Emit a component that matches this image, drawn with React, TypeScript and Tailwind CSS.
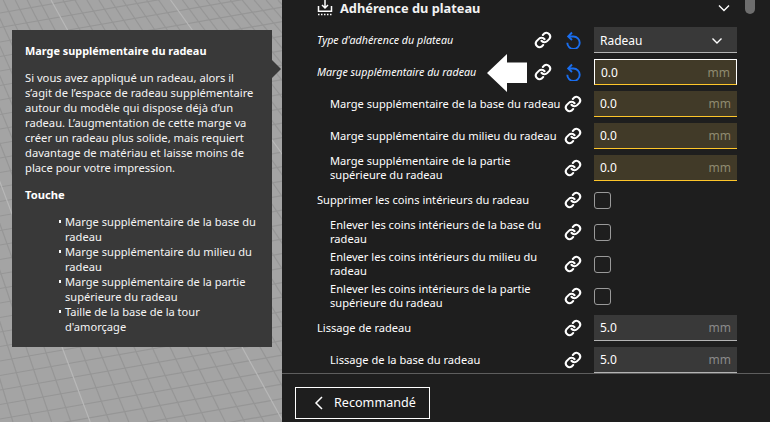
const fontStack = "font-['Noto_Sans','Open_Sans',sans-serif]";

function LinkIcon() {
  return (
    <svg width="18" height="18" viewBox="0 0 24 24" fill="none" stroke="#fff" strokeWidth="2.800" strokeLinecap="round" strokeLinejoin="round" className="shrink-0">
      <path d="M10 13a5 5 0 0 0 7.500.5l3-3a5 5 0 0 0-7-7l-1.700 1.700" />
      <path d="M14 11a5 5 0 0 0-7.500-.5l-3 3a5 5 0 0 0 7 7l1.700-1.700" />
    </svg>
  );
}

function ResetIcon() {
  return (
    <svg width="17" height="18" viewBox="0 0 17 18" fill="none" stroke="#196ef0" strokeWidth="1.900" className="shrink-0">
      <path d="M4 5.500h4.500a6.200 6.200 0 1 1-6.200 6.200" />
      <path d="M7 1.500 3.200 5.500 7 9" />
    </svg>
  );
}

function Field({ value, state = "normal" }: { value: string; state?: "normal" | "warn" | "focus" }) {
  const cls =
    state === "normal"
      ? "bg-[#393939] border-b border-[#b4b4b4]"
      : state === "warn"
      ? "bg-[#413a28] border-b border-[#fec62a]"
      : "bg-[#413a28] border border-white border-b-[#fec62a]";
  return (
    <div className={`w-[143px] h-[26px] shrink-0 flex items-center justify-between pl-[6px] pr-[6px] pt-[1px] text-[12px] ${cls}`}>
      <span className="text-white">{value}</span>
      <span className={state === "normal" ? "text-[#8a8a8a]" : "text-[#8f8a70]"}>mm</span>
    </div>
  );
}

function Check() {
  return <div className="w-[17px] h-[17px] rounded-[3px] border-[1.5px] border-[#9a9a9a]" />;
}

type RowProps = {
  label: React.ReactNode;
  indent?: boolean;
  italic?: boolean;
  reset?: boolean;
  control: React.ReactNode;
};

function Row({ label, indent, italic, reset, control }: RowProps) {
  return (
    <div className="h-[32px] flex items-center pl-[35px] pr-[33px]">
      <div className={`flex-1 min-w-0 flex items-center leading-[14px] whitespace-nowrap text-white ${indent ? "pl-[13px]" : ""} ${italic ? "italic text-[10.700px]" : "text-[11.100px]"}`}>
        <span>{label}</span>
      </div>
      {reset ? (
        <div className="flex items-center gap-[13px] mr-[12px]">
          <LinkIcon />
          <ResetIcon />
        </div>
      ) : (
        <div className="mr-[12px]">
          <LinkIcon />
        </div>
      )}
      <div className="w-[143px] shrink-0 flex items-center">{control}</div>
    </div>
  );
}

function Grid() {
  const lines: React.ReactNode[] = [];
  const vx = -326;
  const vy = -685;
  const y0 = 347;
  for (let i = -30; i < 30; i++) {
    const y = 361 + i * 14.5;
    lines.push(<line key={`h${i}`} x1="0" y1={y} x2="282" y2={y - 282 * 0.175} stroke="#969696" strokeWidth="1.200" />);
  }
  for (let i = -40; i < 30; i++) {
    const xAt = 62 + i * 18;
    const slope = (xAt - vx) / (y0 - vy);
    const xTop = xAt - slope * y0;
    const xBottom = xAt + slope * (422 - y0);
    const major = i % 10 === 0;
    lines.push(
      <line
        key={`v${i}`}
        x1={xTop}
        y1="0"
        x2={xBottom}
        y2="422"
        stroke={major ? "#b8b8b8" : "#969696"}
        strokeWidth="1.200"
      />
    );
  }
  return (
    <svg width="282" height="422" className="block">
      {lines}
    </svg>
  );
}

export default function App() {
  return (
    <div className={`relative w-[770px] h-[422px] overflow-hidden flex ${fontStack}`}>
      <div className="w-[282px] h-full shrink-0 bg-[#a4a4a4]">
        <Grid />
      </div>

      <div className="flex-1 min-w-0 h-full bg-[#1e1e1e] flex flex-col relative">
        <div className="flex-1 min-h-0 overflow-hidden">
          <div className="h-[24px] flex items-start pl-[35px] pr-[33px]">
            <svg width="16" height="16" viewBox="0 0 16 16" fill="none" stroke="#fff" strokeWidth="1.500" className="shrink-0">
              <path d="M8 0v7.500M5 5l3 3 3-3" />
              <path d="M1.500 6v5.200h13V6" />
              <path d="M1 14.500h14" strokeDasharray="1.500 1.500" />
            </svg>
            <span className="ml-[7px] text-[12.800px] leading-[16px] font-bold text-[#f2f2f2]">Adhérence du plateau</span>
            <svg width="12" height="8" viewBox="0 0 12 8" fill="none" stroke="#fff" strokeWidth="1.400" className="ml-auto mt-[4px] mr-[7px]">
              <path d="M1 1.500 6 6.500l5-5" />
            </svg>
          </div>
          <Row
            italic
            reset
            label="Type d'adhérence du plateau"
            control={
              <div className="w-[143px] h-[26px] bg-[#393939] border-b border-[#b4b4b4] flex items-center justify-between pl-[6px] pr-[14px] pt-[2px] text-[12px] text-white">
                <span>Radeau</span>
                <svg width="12" height="8" viewBox="0 0 12 8" fill="none" stroke="#fff" strokeWidth="1.400">
                  <path d="M1.500 1.500 6 6l4.500-4.500" />
                </svg>
              </div>
            }
          />
          <Row italic reset label="Marge supplémentaire du radeau" control={<Field value="0.0" state="focus" />} />
          <Row indent label="Marge supplémentaire de la base du radeau" control={<Field value="0.0" state="warn" />} />
          <Row indent label="Marge supplémentaire du milieu du radeau" control={<Field value="0.0" state="warn" />} />
          <Row indent label={<>Marge supplémentaire de la partie<br />supérieure du radeau</>} control={<Field value="0.0" state="warn" />} />
          <Row label="Supprimer les coins intérieurs du radeau" control={<Check />} />
          <Row indent label={<>Enlever les coins intérieurs de la base du<br />radeau</>} control={<Check />} />
          <Row indent label={<>Enlever les coins intérieurs du milieu du<br />radeau</>} control={<Check />} />
          <Row indent label={<>Enlever les coins intérieurs de la partie<br />supérieure du radeau</>} control={<Check />} />
          <Row label="Lissage de radeau" control={<Field value="5.0" />} />
          <Row indent label="Lissage de la base du radeau" control={<Field value="5.0" />} />
        </div>
        <div className="h-[49px] shrink-0 border-t border-[#5e5e5e] pt-[13px] pl-[13px]">
          <div className="w-[135px] h-[32px] border border-white flex items-center pl-[18px] text-[12.600px] text-white">
            <svg width="9" height="14" viewBox="0 0 9 14" fill="none" stroke="#fff" strokeWidth="1.500">
              <path d="M8 1 2 7l6 6" />
            </svg>
            <span className="ml-[11px]">Recommandé</span>
          </div>
        </div>
        <div className="absolute left-[463px] top-0 w-[10px] h-[14px] rounded-b-[5px] bg-[#6e6e6e]" />
        <svg width="40" height="38" viewBox="0 0 40 38" className="absolute left-[205px] top-[54px]">
          <path d="M0 19 20 0V8.500H40V29H20V38Z" fill="#fff" />
        </svg>
      </div>

      <div className="absolute left-[12px] top-[30px] w-[260px] h-[317px] bg-[#393939] pl-[13px] pr-[6px] pt-[13px] text-[11.200px] leading-[15px] text-[#f5f5f5]">
        <p className="font-bold text-[10.900px] text-white">Marge supplémentaire du radeau</p>
        <p className="mt-[12px] w-[235px]">
          Si vous avez appliqué un radeau, alors il s’agit de l’espace de radeau supplémentaire autour du modèle qui dispose déjà d’un radeau. L’augmentation de cette marge va créer un radeau plus solide, mais requiert davantage de matériau et laisse moins de place pour votre impression.
        </p>
        <p className="mt-[12px] font-bold text-white">Touche</p>
        <ul className="mt-[12px] pl-[33.500px]">
          {[
            <>Marge supplémentaire de la base du<br />radeau</>,
            <>Marge supplémentaire du milieu du<br />radeau</>,
            <>Marge supplémentaire de la partie<br />supérieure du radeau</>,
            <>Taille de la base de la tour<br />d'amorçage</>,
          ].map((t, i) => (
            <li key={i} className="flex whitespace-nowrap">
              <span className="w-[2.500px] h-[2.500px] mt-[6px] mr-[4px] bg-white shrink-0" />
              <span className="text-[11.100px]">{t}</span>
            </li>
          ))}
        </ul>
        <div className="absolute left-[260px] top-[30px] w-0 h-0 border-y-[9px] border-y-transparent border-l-[9px] border-l-[#393939]" />
      </div>
    </div>
  );
}
